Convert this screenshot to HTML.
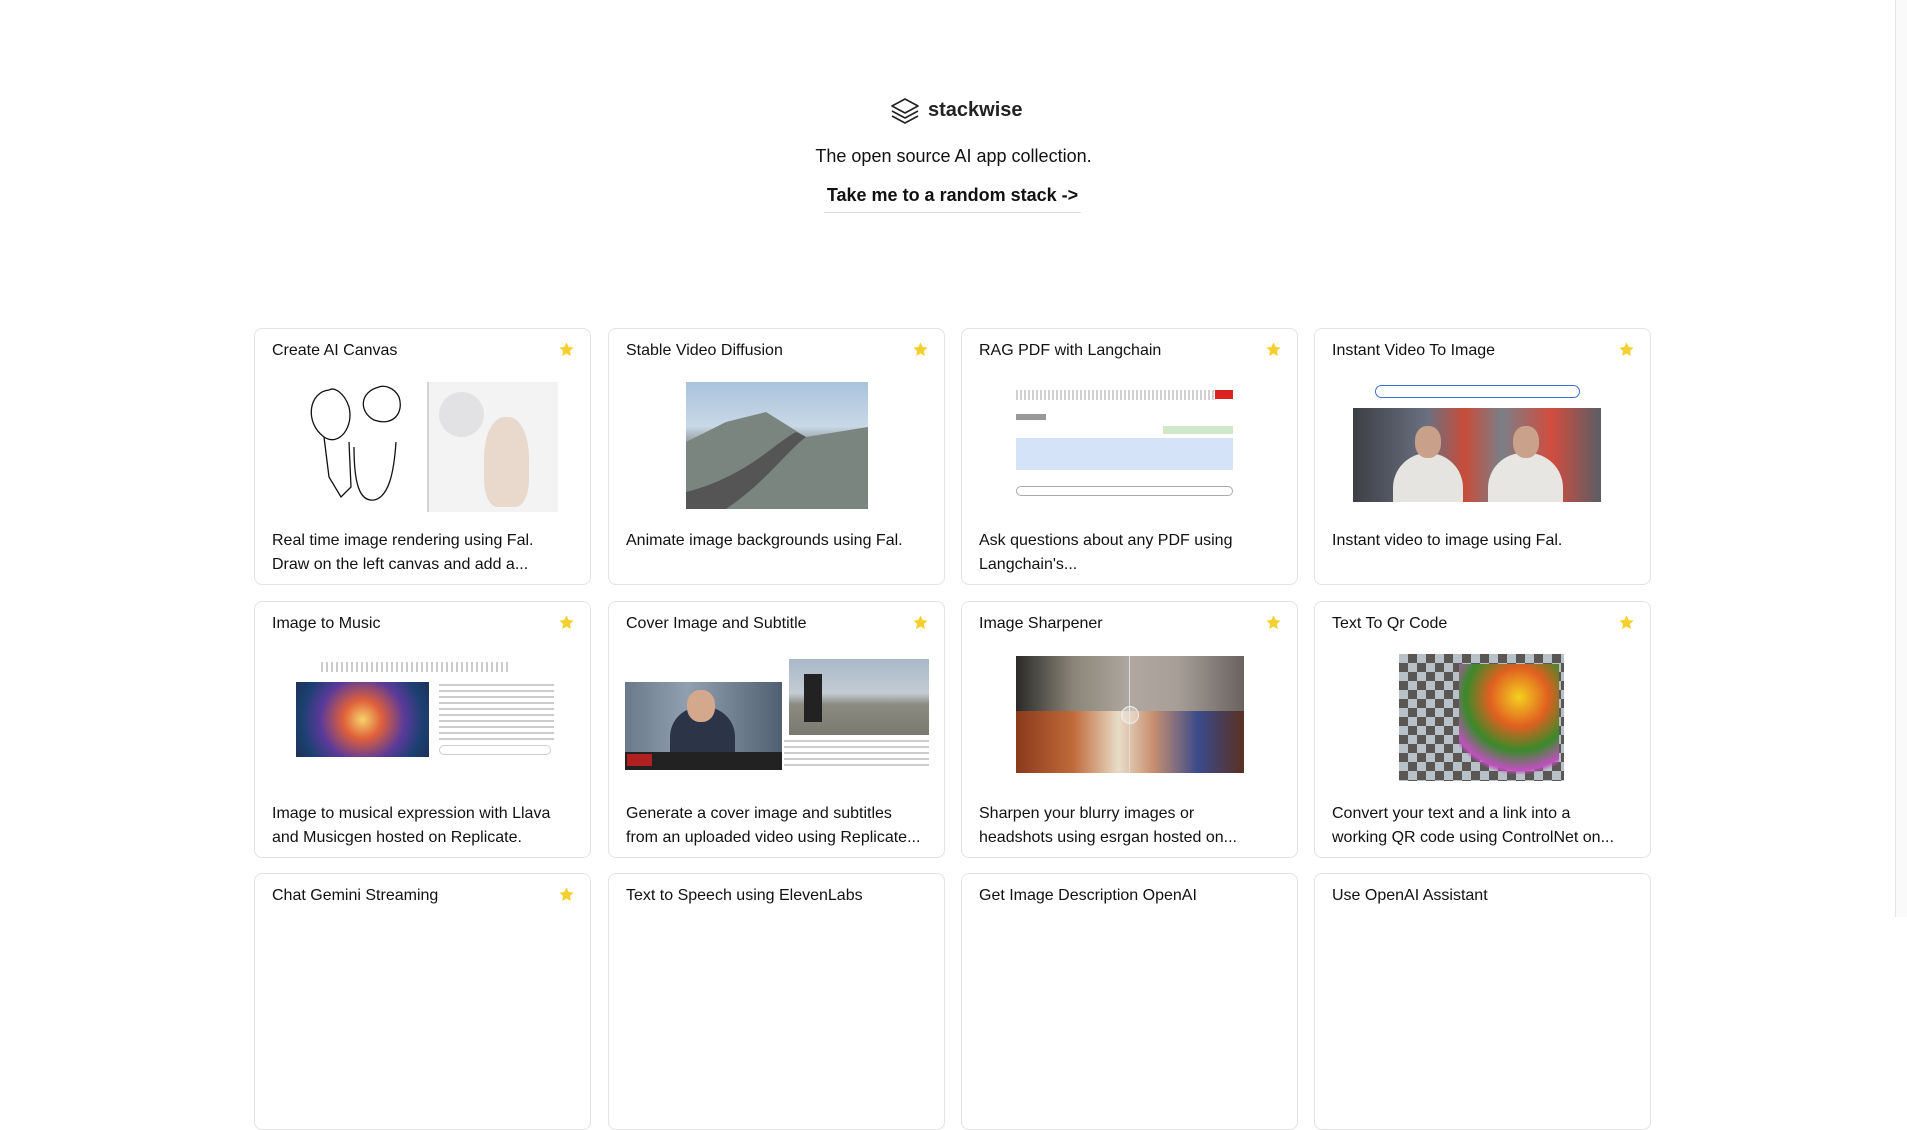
<!DOCTYPE html>
<html><head><meta charset="utf-8"><style>
*{box-sizing:border-box;margin:0;padding:0}
body{width:1907px;height:917px;overflow:hidden;background:#fff;font-family:"Liberation Sans",sans-serif;color:#111;position:relative}
.sb{position:absolute;right:0;top:0;width:12px;height:917px;border-left:1px solid #e5e5e5;background:#fafafa}
.card{position:absolute;width:337px;height:257px;border:1px solid #e3e3e3;border-radius:8px;background:#fff;overflow:hidden}
.t{position:absolute;left:17px;top:11px;font-size:16px;line-height:22px;color:#111}
.star{position:absolute;right:15px;top:12px;width:17px;height:17px}
.d{position:absolute;left:17px;top:200px;width:310px;font-size:16px;line-height:24px;color:#111;white-space:nowrap}
.im{position:absolute}
</style></head><body>
<div class="sb"></div>
<svg style="position:absolute;left:889px;top:97px" width="32" height="30" viewBox="0 0 32 30" fill="none" stroke="#222" stroke-width="1.6" stroke-linejoin="round"><path d="M16 2 L29 9 L16 16 L3 9 Z"/><path d="M3 14 L16 21 L29 14"/><path d="M3 19 L16 26 L29 19"/></svg>
<div style="position:absolute;left:928px;top:99px;font-size:20px;font-weight:600;color:#222">stackwise</div>
<div style="position:absolute;left:0;width:1907px;top:146px;text-align:center;font-size:18px">The open source AI app collection.</div>
<div style="position:absolute;left:824px;width:257px;top:185px;text-align:center;font-size:18px;font-weight:bold;padding-bottom:6px;border-bottom:1px solid #ddd">Take me to a random stack -&gt;</div>

<!-- Row 1 -->
<div class="card" style="left:254px;top:328px"><div class="t">Create AI Canvas</div>
<svg class="star" viewBox="0 0 24 24"><path fill="#f5cf2e" d="M12 2l3 6.5 7 .8-5.2 4.8 1.4 7L12 17.6 5.8 21.1l1.4-7L2 9.3l7-.8z"/></svg>
<div class="im" style="left:44px;top:53px;width:259px;height:130px;background:#fff">
<svg width="259" height="130" viewBox="0 0 259 130" fill="none" stroke="#111" stroke-width="1.3"><path d="M30 8 C10 10 5 40 25 55 C40 65 55 45 50 25 C45 10 35 5 30 8Z"/><path d="M80 5 C60 10 60 30 75 38 C95 45 105 30 100 15 C95 5 85 3 80 5Z"/><path d="M25 55 L30 95 L42 115 L52 105 L50 60"/><path d="M55 65 C55 100 60 120 75 118 C90 115 95 90 97 60"/><line x1="129" y1="0" x2="129" y2="130" stroke="#bbb"/></svg>
<div style="position:absolute;left:130px;top:0;width:129px;height:130px;background:#f4f3f4"></div>
<div style="position:absolute;left:140px;top:10px;width:45px;height:45px;border-radius:50%;background:#e2e2e4"></div>
<div style="position:absolute;left:185px;top:35px;width:45px;height:90px;border-radius:45% 45% 30% 30%;background:#e9d8cc"></div>
</div>
<div class="d">Real time image rendering using Fal.<br>Draw on the left canvas and add a...</div></div>

<div class="card" style="left:608px;top:328px"><div class="t">Stable Video Diffusion</div>
<svg class="star" viewBox="0 0 24 24"><path fill="#f5cf2e" d="M12 2l3 6.5 7 .8-5.2 4.8 1.4 7L12 17.6 5.8 21.1l1.4-7L2 9.3l7-.8z"/></svg>
<div class="im" style="left:77px;top:53px;width:182px;height:127px;background:linear-gradient(#a9c3dc 0%,#c8d8e6 35%,#8a9090 50%,#6c7c6a 75%,#9aa06a 100%)"><svg width="182" height="127"><path d="M0 60 L40 40 L80 30 L120 55 L182 45 L182 127 L0 127Z" fill="#7a8580"/><path d="M0 110 C60 95 90 60 110 50 L120 55 C100 70 80 100 40 127 L0 127Z" fill="#555"/></svg></div>
<div class="d">Animate image backgrounds using Fal.</div></div>

<div class="card" style="left:961px;top:328px"><div class="t">RAG PDF with Langchain</div>
<svg class="star" viewBox="0 0 24 24"><path fill="#f5cf2e" d="M12 2l3 6.5 7 .8-5.2 4.8 1.4 7L12 17.6 5.8 21.1l1.4-7L2 9.3l7-.8z"/></svg>
<div class="im" style="left:54px;top:57px;width:225px;height:120px;background:#fff">
<div style="position:absolute;left:0;top:4px;width:200px;height:10px;background:repeating-linear-gradient(90deg,#888 0 2px,#fff 2px 4px);opacity:.4"></div>
<div style="position:absolute;right:8px;top:4px;width:18px;height:9px;background:#d22"></div>
<div style="position:absolute;left:0;top:28px;width:30px;height:6px;background:#999"></div>
<div style="position:absolute;right:8px;top:40px;width:70px;height:8px;background:#cfe8c8"></div>
<div style="position:absolute;left:0;top:52px;width:217px;height:32px;background:#d4e3f7"></div>
<div style="position:absolute;left:0;top:100px;width:217px;height:10px;border:1px solid #aaa;border-radius:5px"></div>
</div>
<div class="d">Ask questions about any PDF using<br>Langchain's...</div></div>

<div class="card" style="left:1314px;top:328px"><div class="t">Instant Video To Image</div>
<svg class="star" viewBox="0 0 24 24"><path fill="#f5cf2e" d="M12 2l3 6.5 7 .8-5.2 4.8 1.4 7L12 17.6 5.8 21.1l1.4-7L2 9.3l7-.8z"/></svg>
<div class="im" style="left:60px;top:56px;width:205px;height:13px;border:1.5px solid #3a6fd8;border-radius:7px"></div>
<div class="im" style="left:38px;top:79px;width:248px;height:94px;background:linear-gradient(90deg,#3d3f45,#6a7080 30%,#c84c3a 45%,#7a7f88 60%,#d24c3e 80%,#5a5e66)">
<div style="position:absolute;left:40px;top:45px;width:70px;height:49px;border-radius:35px 35px 0 0;background:#e6e4e0"></div>
<div style="position:absolute;left:62px;top:18px;width:26px;height:32px;border-radius:45%;background:#c9a08a"></div>
<div style="position:absolute;left:135px;top:45px;width:75px;height:49px;border-radius:35px 35px 0 0;background:#e8e6e2"></div>
<div style="position:absolute;left:160px;top:18px;width:26px;height:32px;border-radius:45%;background:#caa28c"></div></div>
<div class="d">Instant video to image using Fal.</div></div>

<!-- Row 2 -->
<div class="card" style="left:254px;top:601px"><div class="t">Image to Music</div>
<svg class="star" viewBox="0 0 24 24"><path fill="#f5cf2e" d="M12 2l3 6.5 7 .8-5.2 4.8 1.4 7L12 17.6 5.8 21.1l1.4-7L2 9.3l7-.8z"/></svg>
<div class="im" style="left:66px;top:60px;width:190px;height:10px;background:repeating-linear-gradient(90deg,#999 0 2px,#fff 2px 5px);opacity:.5"></div>
<div class="im" style="left:41px;top:80px;width:133px;height:75px;background:radial-gradient(circle at 50% 50%,#f6d36a,#e0603a 25%,#5a3a9a 55%,#1a4070 80%,#20305a)"></div>
<div class="im" style="left:184px;top:82px;width:115px;height:58px;background:repeating-linear-gradient(#aaa 0 2px,#fff 2px 6px);opacity:.6"></div>
<div class="im" style="left:184px;top:143px;width:112px;height:10px;border:1px solid #ccc;border-radius:5px"></div>
<div class="d">Image to musical expression with Llava<br>and Musicgen hosted on Replicate.</div></div>

<div class="card" style="left:608px;top:601px"><div class="t">Cover Image and Subtitle</div>
<svg class="star" viewBox="0 0 24 24"><path fill="#f5cf2e" d="M12 2l3 6.5 7 .8-5.2 4.8 1.4 7L12 17.6 5.8 21.1l1.4-7L2 9.3l7-.8z"/></svg>
<div class="im" style="left:16px;top:80px;width:157px;height:88px;background:linear-gradient(90deg,#6a7a8a,#90a0b0 40%,#506070);">
<div style="position:absolute;left:45px;top:25px;width:65px;height:63px;border-radius:30px 30px 0 0;background:#2c3448"></div>
<div style="position:absolute;left:62px;top:8px;width:28px;height:32px;border-radius:45%;background:#d4a88c"></div>
<div style="position:absolute;left:0;top:70px;width:157px;height:18px;background:#222"></div>
<div style="position:absolute;left:2px;top:72px;width:25px;height:12px;background:#b02020"></div></div>
<div class="im" style="left:180px;top:57px;width:140px;height:76px;background:linear-gradient(#a8b8c8,#c4ccd4 45%,#8a8a80 60%,#7a7a70)"><div style="position:absolute;left:15px;top:15px;width:18px;height:48px;background:#222"></div></div>
<div class="im" style="left:175px;top:138px;width:145px;height:30px;background:repeating-linear-gradient(#999 0 2px,#fff 2px 6px);opacity:.5"></div>
<div class="d">Generate a cover image and subtitles<br>from an uploaded video using Replicate...</div></div>

<div class="card" style="left:961px;top:601px"><div class="t">Image Sharpener</div>
<svg class="star" viewBox="0 0 24 24"><path fill="#f5cf2e" d="M12 2l3 6.5 7 .8-5.2 4.8 1.4 7L12 17.6 5.8 21.1l1.4-7L2 9.3l7-.8z"/></svg>
<div class="im" style="left:54px;top:54px;width:228px;height:117px;background:linear-gradient(90deg,#2a2a28,#8a8478 25%,#b0a8a0 50%,#a8a098 70%,#6a6260);">
<div style="position:absolute;left:0;top:55px;width:228px;height:62px;background:linear-gradient(90deg,#8a3a1a,#c06a3a 25%,#e8dcc8 45%,#c89070 60%,#3a4a8a 80%,#5a3020)"></div>
<div style="position:absolute;left:113px;top:0;width:1px;height:117px;background:#ddd"></div>
<div style="position:absolute;left:105px;top:50px;width:18px;height:18px;border-radius:50%;border:1.5px solid #eee;background:rgba(255,255,255,.3)"></div></div>
<div class="d">Sharpen your blurry images or<br>headshots using esrgan hosted on...</div></div>

<div class="card" style="left:1314px;top:601px"><div class="t">Text To Qr Code</div>
<svg class="star" viewBox="0 0 24 24"><path fill="#f5cf2e" d="M12 2l3 6.5 7 .8-5.2 4.8 1.4 7L12 17.6 5.8 21.1l1.4-7L2 9.3l7-.8z"/></svg>
<div class="im" style="left:84px;top:52px;width:165px;height:127px;background:repeating-conic-gradient(#5a5654 0 25%,#b8c0c8 0 50%) 0 0/18px 18px">
<div style="position:absolute;left:60px;top:10px;width:100px;height:110px;background:radial-gradient(circle at 60% 30%,#f5d020,#e06020 30%,#3a8a2a 55%,#c050c0 75%,transparent 80%)"></div></div>
<div class="d">Convert your text and a link into a<br>working QR code using ControlNet on...</div></div>

<!-- Row 3 -->
<div class="card" style="left:254px;top:873px"><div class="t">Chat Gemini Streaming</div>
<svg class="star" viewBox="0 0 24 24"><path fill="#f5cf2e" d="M12 2l3 6.5 7 .8-5.2 4.8 1.4 7L12 17.6 5.8 21.1l1.4-7L2 9.3l7-.8z"/></svg></div>
<div class="card" style="left:608px;top:873px"><div class="t">Text to Speech using ElevenLabs</div></div>
<div class="card" style="left:961px;top:873px"><div class="t">Get Image Description OpenAI</div></div>
<div class="card" style="left:1314px;top:873px"><div class="t">Use OpenAI Assistant</div></div>
</body></html>
